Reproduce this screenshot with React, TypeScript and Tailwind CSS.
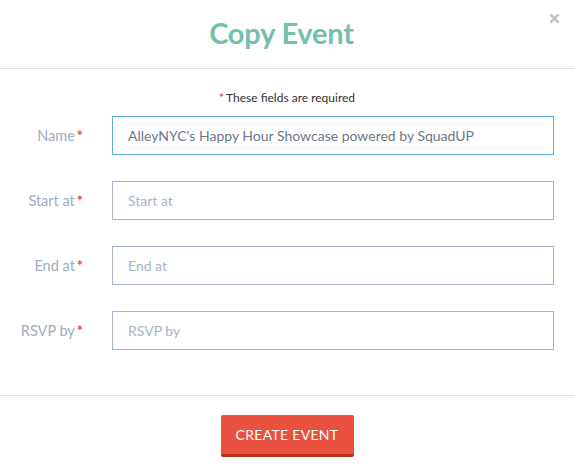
import React from 'react';

const fields = [
  { label: 'Name', placeholder: 'Name', value: "AlleyNYC's Happy Hour Showcase powered by SquadUP", active: true },
  { label: 'Start at', placeholder: 'Start at', value: '' },
  { label: 'End at', placeholder: 'End at', value: '' },
  { label: 'RSVP by', placeholder: 'RSVP by', value: '' },
];

const App = () => {
  return (
    <div className="w-[574px] h-[475px] bg-white relative" style={{ fontFamily: 'Lato, "Open Sans", sans-serif' }}>
      {/* header */}
      <div className="h-[69px] border-b border-[#e3e3e3] flex items-center justify-center">
        <h1 className="text-[29px] font-bold text-[#74bfad] tracking-[-0.2px] mt-[-2px] mr-[11px]">Copy Event</h1>
        <button className="absolute right-[14px] top-[13px] text-[#c4c4c4]">
          <svg width="11" height="11" viewBox="0 0 11 11">
            <path d="M1.5 1.5 L9.5 9.5 M9.5 1.5 L1.5 9.5" stroke="currentColor" strokeWidth="2.6" />
          </svg>
        </button>
      </div>

      {/* body */}
      <div className="h-[327px] border-b border-[#e3e3e3] pt-[20px]">
        <p className="text-center text-[12px] text-[#333] leading-[17px]">
          <span className="text-[#e74c3c] font-bold mr-[2px]">*</span>These fields are required
        </p>
        <div className="flex flex-col gap-[26px] mt-[10px]">
          {fields.map((f) => (
            <div key={f.label} className="flex items-center">
              <label className="w-[83px] text-right text-[14.5px] text-[#a1abc1]">
                {f.label}
                <span className="text-[#e74c3c] font-bold ml-[2px]">*</span>
              </label>
              <input
                className={
                  'ml-[29px] w-[442px] h-[39px] px-[15px] text-[14px] outline-none bg-white ' +
                  (f.active
                    ? 'border border-[#5dade2] text-[#6e7787]'
                    : 'border border-[#a6b3cb] text-[#6e7787] placeholder:text-[#a9b3c8]')
                }
                style={{ fontFamily: 'inherit' }}
                defaultValue={f.value}
                placeholder={f.placeholder}
              />
            </div>
          ))}
        </div>
      </div>

      {/* footer */}
      <div className="flex justify-center pt-[19px]">
        <button className="w-[133px] h-[42px] bg-[#e9513f] border-b-[3px] border-[#c0301f] rounded-[2px] text-white text-[14px] tracking-[0.3px]">
          CREATE EVENT
        </button>
      </div>
    </div>
  );
};

export default App;
